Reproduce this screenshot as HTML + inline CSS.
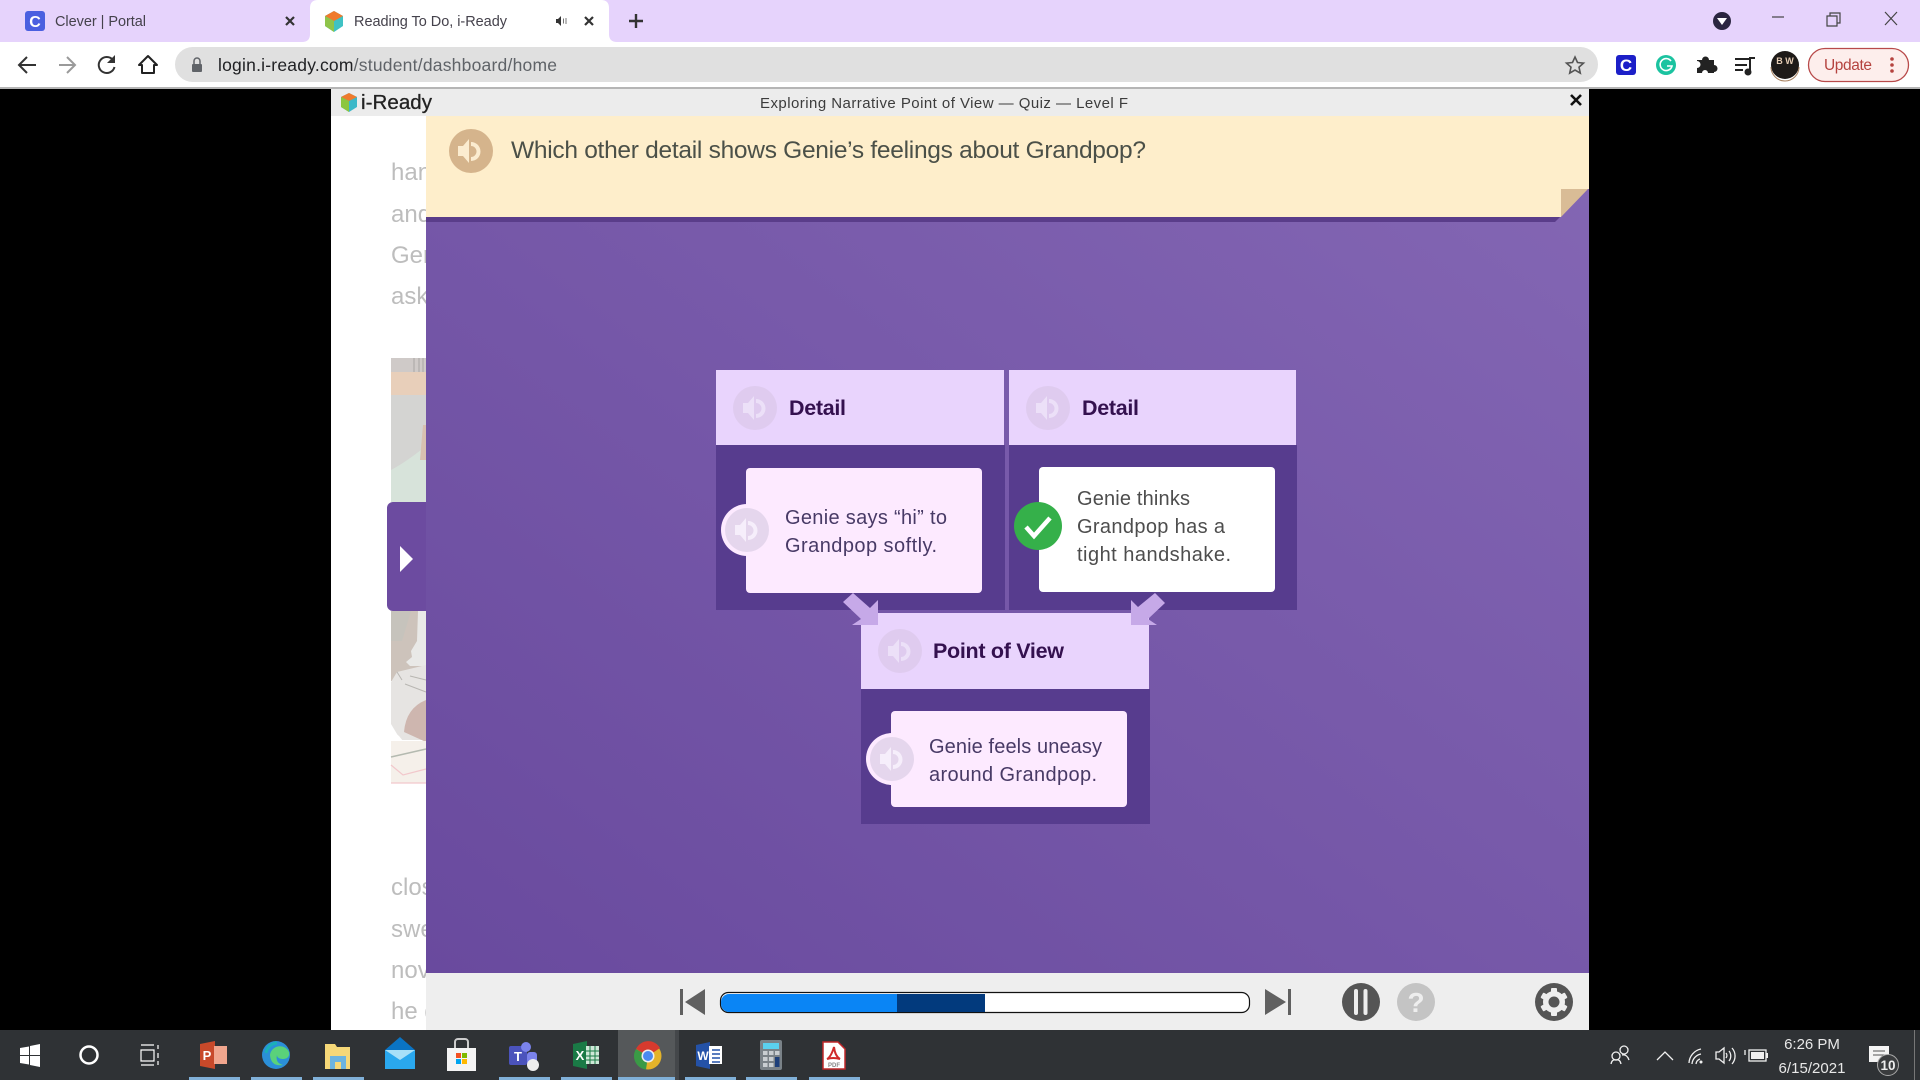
<!DOCTYPE html>
<html><head><meta charset="utf-8"><title>Reading To Do, i-Ready</title>
<style>
html,body{margin:0;padding:0;background:#000;width:1920px;height:1080px;overflow:hidden}
svg{display:block}
text{font-family:"Liberation Sans",sans-serif}
</style></head><body>
<svg width="1920" height="1080" viewBox="0 0 1920 1080" xmlns="http://www.w3.org/2000/svg">
<defs>
<linearGradient id="bg" x1="0" y1="1" x2="1" y2="0"><stop offset="0" stop-color="#694a9e"/><stop offset="1" stop-color="#8467b4"/></linearGradient>
<g id="spk"><path d="M-11-5h5l6-7v24l-6-7h-5z"/><path d="M2-9a9.500 9.500 0 0 1 0 19v-4a5.500 5.500 0 0 0 0-11z"/></g>
</defs>

<!-- browser chrome -->
<rect width="1920" height="42" fill="#e6d3fc"/>
<rect y="42" width="1920" height="45" fill="#fff"/>
<rect y="87" width="1920" height="2" fill="#b5b5b5"/>
<path d="M302 42q8 0 8-8V8q0-8 8-8h283q8 0 8 8v26q0 8 8 8z" fill="#fff"/>
<rect x="25" y="11" width="20" height="20" rx="3" fill="#4a5fe0"/>
<text x="35" y="27" font-size="16" font-weight="700" fill="#fff" text-anchor="middle">C</text>
<text x="55" y="26" font-size="14.500" fill="#45424c" textLength="91">Clever | Portal</text>
<path d="M286 17l8 8M294 17l-8 8" stroke="#333" stroke-width="2.200"/>
<path d="M334 11l9 5v10l-9 6-9-6V16z" fill="#3fc2c4"/><path d="M334 11l9 5-9 5-9-5z" fill="#f07a2c"/><path d="M325 16l9 5v11l-9-6z" fill="#8fc44a"/>
<text x="354" y="26" font-size="14.500" fill="#45424c" textLength="153">Reading To Do, i-Ready</text>
<path d="M556 19h2l3-3v10l-3-3h-2z" fill="#333"/><path d="M563.500 18.500v5M566 18v6" stroke="#777" stroke-width="1"/>
<path d="M585 17l8 8M593 17l-8 8" stroke="#333" stroke-width="2.200"/>
<path d="M636 14v14M629 21h14" stroke="#333" stroke-width="2.400"/>

<circle cx="1722" cy="21" r="9" fill="#2b2540"/><path d="M1717 18h10l-5 7z" fill="#fff"/>
<path d="M1772 17h12" stroke="#444" stroke-width="1.200"/>
<path d="M1827 16h10v10h-10zM1830 16v-3h10v10h-3" fill="none" stroke="#444" stroke-width="1.200"/>
<path d="M1885 12l12 13M1897 12l-12 13" stroke="#444" stroke-width="1.200"/>

<path d="M36 65H20M27 57l-8 8 8 8" fill="none" stroke="#333" stroke-width="2"/>
<path d="M76 65H60M68 57l8 8-8 8" fill="none" stroke="#9a9a9a" stroke-width="2" transform="translate(-1,0)"/>
<path d="M113 60a8 8 0 1 0 1.500 7" fill="none" stroke="#333" stroke-width="2"/><path d="M115 55v8h-8z" fill="#333"/>
<path d="M148 56l-9 9h3v8h12v-8h3z" fill="none" stroke="#222" stroke-width="2" stroke-linejoin="round"/>

<rect x="175" y="47" width="1423" height="35" rx="17.500" fill="#e0e0e0"/>
<rect x="192" y="64" width="10" height="8" rx="1" fill="#606368"/><path d="M194 64v-3a3 3 0 0 1 6 0v3" fill="none" stroke="#606368" stroke-width="1.500"/>
<text x="218" y="71" font-size="17.500" textLength="339"><tspan fill="#202124">login.i-ready.com</tspan><tspan fill="#5f6368">/student/dashboard/home</tspan></text>
<path d="M1575 57l2.500 5.500 6 .6-4.500 4 1.300 6-5.300-3.100-5.300 3.100 1.300-6-4.500-4 6-.6z" fill="none" stroke="#555" stroke-width="1.600"/>

<rect x="1616" y="55" width="20" height="20" rx="3" fill="#1c1fc8"/><text x="1626" y="71" font-size="17" font-weight="700" fill="#fff" text-anchor="middle">C</text>
<circle cx="1666" cy="65" r="10" fill="#1bc3a0"/><path d="M1671 61a6 6 0 1 0 1 5h-5" fill="none" stroke="#fff" stroke-width="1.600"/>
<path d="M1697 60h5a3.500 3.500 0 0 1 7 0h5v5a3.500 3.500 0 0 1 0 7v1h-6a3 3 0 0 0-6 0h-5v-5a3.500 3.500 0 0 0 0-7z" fill="#222"/>
<path d="M1735 59h15M1735 65h12M1735 70h8M1750 73V58h5" fill="none" stroke="#222" stroke-width="2"/><circle cx="1748" cy="72" r="3.500" fill="#222"/>
<circle cx="1785" cy="65" r="14" fill="#1e1a18"/><path d="M1771 67a14 14 0 0 0 28 0" fill="none" stroke="#a8815f" stroke-width="1"/>
<text x="1785" y="64" font-size="9" font-weight="700" fill="#e6cdb5" text-anchor="middle">B W</text>
<rect x="1808.500" y="48.500" width="100" height="33" rx="16.500" fill="#fdeeec" stroke="#b84a4a" stroke-width="1.300"/>
<text x="1824" y="70" font-size="15.500" fill="#b5433f" textLength="48">Update</text>
<circle cx="1892" cy="59" r="1.800" fill="#b5433f"/><circle cx="1892" cy="65" r="1.800" fill="#b5433f"/><circle cx="1892" cy="71" r="1.800" fill="#b5433f"/>

<!-- page -->
<rect x="0" y="89" width="1920" height="941" fill="#000"/>
<rect x="331" y="89" width="1258" height="941" fill="#fff"/>
<rect x="331" y="89" width="1258" height="27" fill="#ececec"/>
<path d="M349 93l8 4v10l-8 5-8-5V97z" fill="#3cb8c8"/><path d="M349 93l8 4-8 4-8-4z" fill="#ef7a2c"/><path d="M341 97l8 4v11l-8-5z" fill="#8cc63f"/>
<text x="361" y="109" font-size="20.500" fill="#222" stroke="#222" stroke-width=".3" textLength="71">i-Ready</text>
<text x="760" y="108" font-size="15" fill="#3c3c3c" textLength="368">Exploring Narrative Point of View — Quiz — Level F</text>
<path d="M1571 95l10 10M1581 95l-10 10" stroke="#111" stroke-width="2.600"/>

<g font-size="24" fill="#bdbdbd"><text x="391" y="180">han</text><text x="391" y="222">and</text><text x="391" y="263">Gen</text><text x="391" y="304">ask</text>
<text x="391" y="895">clos</text><text x="391" y="937">swe</text><text x="391" y="978">nov</text><text x="391" y="1019">he g</text></g>

<!-- left illustration -->
<rect x="391" y="358" width="35" height="14" fill="#cfcac8"/><path d="M414 358v14M419 358v14M423 358v14" stroke="#b5b2b0" stroke-width="1.500"/>
<rect x="391" y="372" width="35" height="23" fill="#e8cfba"/>
<rect x="391" y="395" width="35" height="107" fill="#d4d4d2"/>
<path d="M391 470q15-8 35-24v56h-35z" fill="#d7e3da"/><path d="M423 425h3v35h-6z" fill="#d8c0b0"/>
<rect x="391" y="611" width="35" height="70" fill="#cdc3bb"/>
<path d="M391 611h20l-9 30h-11z" fill="#c6c3bc"/>
<path d="M418 611h8v55h-16l-4-4 6-5-1-6 6-10z" fill="#e9e9e7"/>
<path d="M397 672l29-7v75h-25l-4-6-6-10v-42z" fill="#e6e4e2"/>
<path d="M397 672l5 8M410 676l16 4M405 684l21 8" stroke="#b8b6b2" stroke-width="1" fill="none"/>
<path d="M426 700q-20 8-22 32l22 10z" fill="#ceb6af"/>
<path d="M391 730l8 6 4 5h-12z" fill="#fff"/>
<rect x="391" y="741" width="35" height="42" fill="#f5f0ea"/>
<path d="M391 757l35-8" stroke="#b4bab0" stroke-width="1.500"/>
<path d="M391 765l12 10 23-6M391 783h35" fill="none" stroke="#f2c8cc" stroke-width="1.200"/>

<!-- lesson -->
<rect x="426" y="116" width="1163" height="857" fill="url(#bg)"/>
<path d="M426 217h1134l-5 5H426z" fill="#5a3d8a"/>
<path d="M426 116h1163v73h-28v28H426z" fill="#feeecb"/>
<path d="M1561 189h27l-27 28z" fill="#d9bc96"/>
<circle cx="471" cy="151" r="22" fill="#d5b48c"/><use href="#spk" transform="translate(469,151)" fill="#fbecd0"/>
<text x="511" y="158" font-size="24.500" fill="#4b5048" textLength="635">Which other detail shows Genie’s feelings about Grandpop?</text>

<rect x="716" y="445" width="289" height="165" fill="#573c8e"/>
<rect x="716" y="370" width="288" height="75" fill="#e9d4fd"/>
<circle cx="755" cy="408" r="22" fill="#dfcbef"/><use href="#spk" transform="translate(754,408)" fill="#ece0f8"/>
<text x="789" y="415" font-size="21.500" font-weight="700" fill="#34114f" textLength="57">Detail</text>
<rect x="746" y="468" width="236" height="125" rx="4" fill="#fdeaff"/>
<circle cx="747" cy="530" r="26" fill="#fdeaff"/><circle cx="747" cy="530" r="22" fill="#e5d6ed"/><use href="#spk" transform="translate(746,530)" fill="#f6eefb"/>
<text x="785" y="524" font-size="20" fill="#483a66" textLength="162">Genie says “hi” to</text>
<text x="785" y="552" font-size="20" fill="#483a66" textLength="152">Grandpop softly.</text>

<rect x="1009" y="445" width="288" height="165" fill="#573c8e"/>
<rect x="1009" y="370" width="287" height="75" fill="#e9d4fd"/>
<circle cx="1048" cy="408" r="22" fill="#dfcbef"/><use href="#spk" transform="translate(1047,408)" fill="#ece0f8"/>
<text x="1082" y="415" font-size="21.500" font-weight="700" fill="#34114f" textLength="57">Detail</text>
<rect x="1039" y="467" width="236" height="125" rx="4" fill="#fff"/>
<circle cx="1038" cy="526" r="24" fill="#35b04a"/><path d="M1026 527l8 9 16-18" fill="none" stroke="#fff" stroke-width="4.500"/>
<text x="1077" y="505" font-size="20" fill="#4d4d4d" textLength="113">Genie thinks</text>
<text x="1077" y="533" font-size="20" fill="#4d4d4d" textLength="148">Grandpop has a</text>
<text x="1077" y="561" font-size="20" fill="#4d4d4d" textLength="154">tight handshake.</text>

<rect x="861" y="689" width="289" height="135" fill="#573c8e"/>
<rect x="861" y="613" width="288" height="76" fill="#e9d4fd"/>
<circle cx="900" cy="651" r="22" fill="#dfcbef"/><use href="#spk" transform="translate(899,651)" fill="#ece0f8"/>
<text x="933" y="658" font-size="21.500" font-weight="700" fill="#34114f" textLength="131">Point of View</text>
<rect x="891" y="711" width="236" height="96" rx="4" fill="#fdeaff"/>
<circle cx="892" cy="759" r="26" fill="#fdeaff"/><circle cx="892" cy="759" r="22" fill="#e5d6ed"/><use href="#spk" transform="translate(891,759)" fill="#f6eefb"/>
<text x="929" y="753" font-size="20" fill="#483a66" textLength="173">Genie feels uneasy</text>
<text x="929" y="781" font-size="20" fill="#483a66" textLength="168">around Grandpop.</text>

<path d="M853 593l-10 9 18 17-9 6h26v-25l-8 8z" fill="#c6a9e8"/>
<path d="M1155 593l10 10-17 16 9 6h-26v-25l7 7z" fill="#c6a9e8"/>

<path d="M426 502h-33a6 6 0 0 0-6 6v97a6 6 0 0 0 6 6h33z" fill="#6c4ba0"/>
<path d="M400 546l13 13-13 13z" fill="#fff"/>

<!-- controls -->
<rect x="426" y="973" width="1163" height="57" fill="#eeeeee"/>
<path d="M680 989h3v26h-3zM705 989v26l-20-13z" fill="#606060"/>
<path d="M1265 989v26l21-13zM1288 989h3v26h-3z" fill="#606060"/>
<rect x="720.500" y="992.500" width="529" height="20" rx="8" fill="#fff" stroke="#111" stroke-width="1.200"/>
<path d="M897 994h-168a8 8 0 0 0-8 8v2a8 8 0 0 0 8 8h168z" fill="#0a85f5"/>
<rect x="897" y="994" width="88" height="18" fill="#023a7d"/>
<circle cx="1361" cy="1002" r="19" fill="#555"/><rect x="1354" y="989" width="4" height="26" rx="2" fill="#eee"/><rect x="1363.500" y="989" width="4" height="26" rx="2" fill="#eee"/>
<circle cx="1416" cy="1002" r="19" fill="#c4c4c4"/><text x="1416" y="1012" font-size="28" font-weight="700" fill="#eee" text-anchor="middle">?</text>
<circle cx="1554" cy="1002" r="19" fill="#555"/>
<g transform="translate(1554,1002)" fill="#eee"><circle r="11"/><rect x="-3" y="-14" width="6" height="28" rx="1"/><rect x="-3" y="-14" width="6" height="28" rx="1" transform="rotate(60)"/><rect x="-3" y="-14" width="6" height="28" rx="1" transform="rotate(120)"/><circle r="5.500" fill="#555"/></g>

<!-- taskbar -->
<rect y="1030" width="1920" height="50" fill="#2f3235"/>
<rect x="618" y="1030" width="57" height="50" fill="#55585a"/>
<rect x="675" y="1030" width="4" height="50" fill="#44474a"/>
<g fill="#80b0d8"><rect x="189" y="1077" width="51" height="3"/><rect x="251" y="1077" width="51" height="3"/><rect x="313" y="1077" width="51" height="3"/><rect x="499" y="1077" width="51" height="3"/><rect x="561" y="1077" width="51" height="3"/><rect x="618" y="1077" width="57" height="3"/><rect x="685" y="1077" width="51" height="3"/><rect x="746" y="1077" width="51" height="3"/><rect x="809" y="1077" width="51" height="3"/></g>
<path d="M20 1048l9-1.500v8.500h-9zM30 1046l10-2v11H30zM20 1056h9v8.500l-9-1.500zM30 1056h10v11l-10-2z" fill="#fff"/>
<circle cx="89" cy="1055" r="8.500" fill="none" stroke="#fff" stroke-width="2.500"/>
<path d="M141 1045h13M141 1050h13v11h-13zM141 1065h13M158 1045v4M158 1053v5M158 1061v4" fill="none" stroke="#fff" stroke-width="1.200"/>

<path d="M200 1044l15-3v28l-15-3z" fill="#c8492a"/><rect x="214" y="1046" width="13" height="18" fill="#f0a68e"/><text x="207" y="1060" font-size="13" font-weight="700" fill="#fff" text-anchor="middle">P</text>
<circle cx="276" cy="1055" r="14" fill="#2b8fd8"/><path d="M270 1055a10 10 0 0 1 19-3q1 6-5 7-7 0-7-4-2 8 6 10-12 2-13-10z" fill="#5ad27a"/><path d="M266 1053q2-9 11-10" stroke="#1ab0b8" stroke-width="3" fill="none"/>
<path d="M325 1044h10l2 3h13v22h-25z" fill="#f6d878"/><rect x="330" y="1056" width="16" height="13" fill="#6cb4e0"/><rect x="335" y="1062" width="6" height="7" fill="#f6d878"/>
<path d="M385 1050l15-13 15 13v19h-30z" fill="#0a74c4"/><path d="M385 1050h30v19h-30z" fill="#2aa8ee"/><path d="M385 1050l15 10 15-10z" fill="#a8e0f8"/>
<rect x="447" y="1048" width="29" height="23" fill="#f4f4f4"/><path d="M455 1048v-6a3 3 0 0 1 3-3h7a3 3 0 0 1 3 3v6" fill="none" stroke="#ccc" stroke-width="2"/>
<rect x="456" y="1053" width="5" height="5" fill="#f25022"/><rect x="462" y="1053" width="5" height="5" fill="#7fba00"/><rect x="456" y="1059" width="5" height="5" fill="#00a4ef"/><rect x="462" y="1059" width="5" height="5" fill="#ffb900"/>
<rect x="509" y="1046" width="18" height="19" rx="2" fill="#4b53bc"/><circle cx="526" cy="1047" r="5" fill="#7b83eb"/><rect x="527" y="1052" width="10" height="14" rx="3" fill="#7b83eb"/><text x="518" y="1061" font-size="13" font-weight="700" fill="#fff" text-anchor="middle">T</text><circle cx="533" cy="1065" r="6" fill="#eee"/>
<path d="M573 1044l14-3v28l-14-3z" fill="#1a7a46"/><rect x="586" y="1046" width="13" height="18" fill="#cfe8d8"/><path d="M590 1046v18M595 1046v18M586 1051h13M586 1056h13M586 1060h13" stroke="#1a7a46" stroke-width="1"/><text x="580" y="1060" font-size="13" font-weight="700" fill="#fff" text-anchor="middle">X</text>
<circle cx="648" cy="1056" r="13.500" fill="#e3b32a"/><path d="M648 1056l-12-7a13.500 13.500 0 0 1 24-1z" fill="#d63a2e"/><path d="M648 1056l-12-7a13.500 13.500 0 0 0 10 20.500z" fill="#3a9a46"/><circle cx="648" cy="1056" r="6.500" fill="#eee"/><circle cx="648" cy="1056" r="5" fill="#4a8af0"/>
<path d="M696 1045l14-3v27l-14-3z" fill="#2452a8"/><rect x="709" y="1046" width="13" height="18" fill="#fff"/><path d="M712 1050h8M712 1054h8M712 1058h8M712 1062h8" stroke="#2452a8" stroke-width="1.500"/><text x="703" y="1060" font-size="12" font-weight="700" fill="#fff" text-anchor="middle">W</text>
<rect x="760" y="1040" width="22" height="30" rx="2" fill="#7a8288"/><rect x="763" y="1043" width="16" height="6" fill="#5bd0ee"/><g fill="#c9ced2"><rect x="763" y="1051" width="4.500" height="4"/><rect x="769" y="1051" width="4.500" height="4"/><rect x="775" y="1051" width="4.500" height="4"/><rect x="763" y="1057" width="4.500" height="4"/><rect x="769" y="1057" width="4.500" height="4"/><rect x="763" y="1063" width="4.500" height="4"/><rect x="769" y="1063" width="4.500" height="4"/></g><rect x="775" y="1057" width="4.500" height="10" fill="#1d3f7a"/>
<path d="M823 1042h15l7 7v20h-22z" fill="#fff" stroke="#c0282a" stroke-width="1.500"/><path d="M834 1047q-3 10-7 12 6-2 13 0-5-3-6-12z" fill="none" stroke="#d02a2a" stroke-width="2"/><text x="834" y="1067" font-size="6" font-weight="700" fill="#888" text-anchor="middle">PDF</text>

<g fill="none" stroke="#f0f0f0" stroke-width="1.300"><circle cx="1616" cy="1056" r="4"/><path d="M1611 1064q1-5 5-4 4-1 5 4"/><circle cx="1624" cy="1050" r="4"/><path d="M1622 1055q5-1 7 5"/>
<path d="M1657 1060l8-8 8 8"/>
<path d="M1689 1063a15 15 0 0 1 12-14M1692 1064a11 11 0 0 1 9-10M1696 1064a6 6 0 0 1 4-5"/>
<path d="M1716 1052h3l5-4v15l-5-4h-3zM1726 1053a4 4 0 0 1 0 5M1729 1051a8 8 0 0 1 0 10M1732 1048a12 12 0 0 1 0 16"/>
<rect x="1749" y="1050" width="17" height="11"/><path d="M1745 1050v5"/></g>
<circle cx="1701" cy="1062" r="1.500" fill="#f0f0f0"/><rect x="1751" y="1052" width="13" height="7" fill="#f0f0f0"/><rect x="1766" y="1053" width="2" height="5" fill="#f0f0f0"/>
<text x="1812" y="1049" font-size="15" fill="#e8e8e8" text-anchor="middle">6:26 PM</text>
<text x="1812" y="1073" font-size="15" fill="#e8e8e8" text-anchor="middle" textLength="67">6/15/2021</text>
<path d="M1869 1046h20v16h-20z" fill="#f4f4f4"/><path d="M1873 1051h12M1873 1055h12" stroke="#555"/>
<circle cx="1888" cy="1065" r="10.500" fill="#3a3c3e" stroke="#aaa"/><text x="1888" y="1070" font-size="13.500" font-weight="700" fill="#eee" text-anchor="middle">10</text>
<rect x="1914" y="1030" width="1" height="50" fill="#777"/>
</svg>
</body></html>
